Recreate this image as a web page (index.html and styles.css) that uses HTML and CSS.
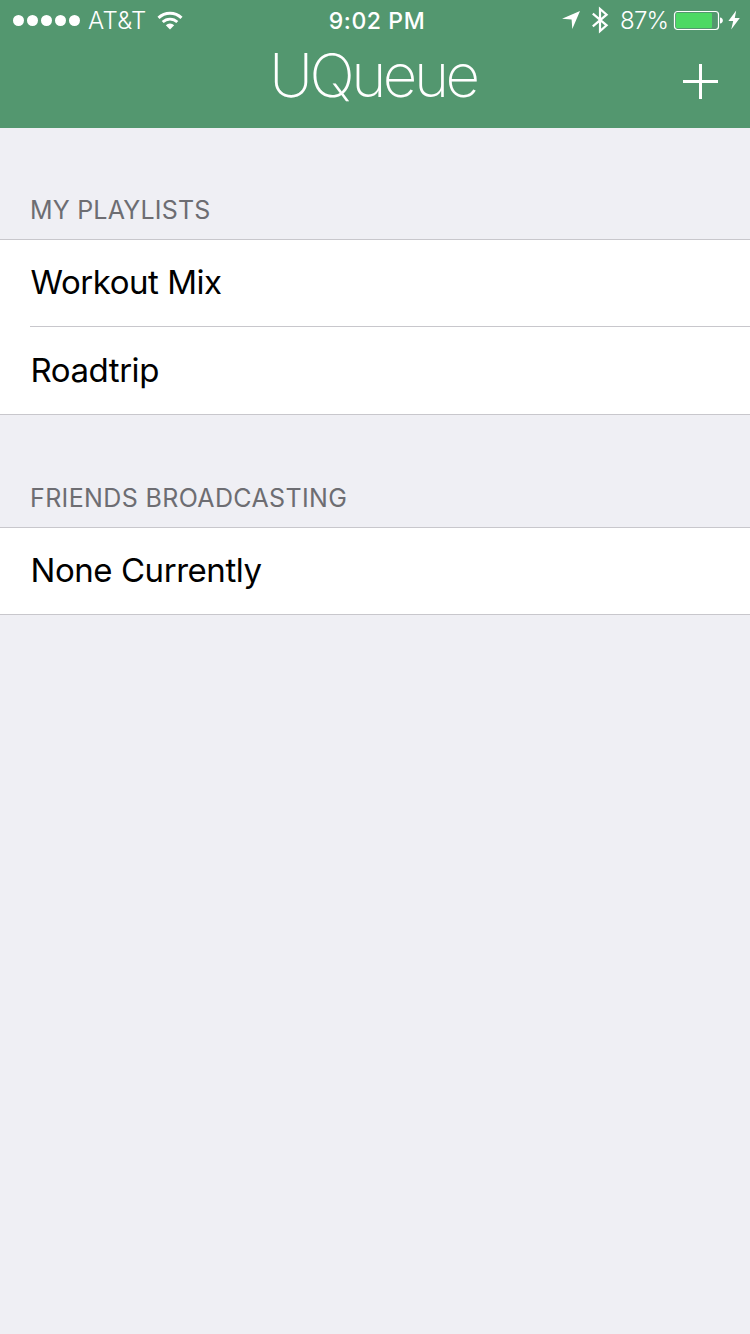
FILE: index.html
```
<!DOCTYPE html>
<html lang="en">
<head>
<meta charset="utf-8">
<title>UQueue</title>
<link rel="stylesheet" href="styles.css">
</head>
<body>
<header class="top">
  <div class="status">
    <div class="status-left">
      <span class="signal"><i class="dot"></i><i class="dot"></i><i class="dot"></i><i class="dot"></i><i class="dot"></i></span>
      <span class="carrier">AT&amp;T</span>
      <svg class="wifi" width="26" height="20" viewBox="0 0 26 20">
        <path d="M1.5 6.8A16.5 16.5 0 0 1 24.5 6.8" fill="none" stroke="#fff" stroke-width="3"/>
        <path d="M5.7 11.1A10.4 10.4 0 0 1 20.3 11.1" fill="none" stroke="#fff" stroke-width="2.8"/>
        <path d="M8.8 14.3A6 6 0 0 1 17.2 14.3L13 18.6Z" fill="#fff"/>
      </svg>
    </div>
    <span class="clock">9:02 PM</span>
    <div class="status-right">
      <svg class="location" width="20" height="20" viewBox="0 0 20 20"><path d="M19 1L11.3 19L10.6 9.6L1 8.7Z" fill="#fff"/></svg>
      <svg class="bluetooth" width="18" height="28" viewBox="0 0 18 28"><path d="M1.8 7.7L15.6 19.3L9 25V3L15.6 8.7L1.8 20.3" fill="none" stroke="#fff" stroke-width="2.2"/></svg>
      <span class="percent">87%</span>
      <svg class="battery" width="48" height="20" viewBox="0 0 48 20">
        <rect x=".5" y="1.5" width="44" height="18" rx="3" fill="none" stroke="#fff" stroke-width="1.2"/>
        <rect x="2" y="3" width="36" height="15" rx="1" fill="#4cd964"/>
        <path d="M46 7.5Q48.8 7.8 48.8 10.5T46 13.5Z" fill="#fff"/>
      </svg>
      <svg class="bolt" width="12" height="20" viewBox="0 0 12 20"><path d="M8.2 .5L.4 11H5.2L3.2 19.5L11.8 8H6.8Z" fill="#fff"/></svg>
    </div>
  </div>
  <div class="nav">
    <h1 class="title">UQueue</h1>
    <svg class="add" width="35" height="35" viewBox="0 0 35 35"><path d="M0 17.5H35M17.5 0V35" stroke="#fff" stroke-width="3"/></svg>
  </div>
</header>
<main>
  <h2 class="heading">MY PLAYLISTS</h2>
  <ul class="list">
    <li class="row">Workout Mix</li>
    <li class="row">Roadtrip</li>
  </ul>
  <h2 class="heading heading-friends">FRIENDS BROADCASTING</h2>
  <ul class="list">
    <li class="row">None Currently</li>
  </ul>
</main>
</body>
</html>
```
FILE: styles.css
```
* { box-sizing: border-box; }
body {
  margin: 0;
  min-height: 1334px;
  background: #efeff4;
  font-family: Inter, "Liberation Sans", sans-serif;
  color: #000;
}
.top { height: 128px; background: #53976f; color: #fff; }
.status {
  height: 40px;
  display: grid;
  grid-template-columns: 1fr auto 1fr;
  align-items: center;
  font-size: 24px;
  line-height: 40px;
  white-space: nowrap;
}
.status-left, .status-right { display: flex; align-items: center; }
.status-left { padding-left: 13px; }
.status-right { justify-content: flex-end; padding-right: 10px; }
.signal { display: flex; gap: 3px; }
.dot { width: 11px; height: 11px; border-radius: 50%; background: #fff; }
.carrier { margin-left: 8px; padding-top: 2px; line-height: 38px; font-weight: 330; letter-spacing: .3px; }
.wifi { margin: 1px 0 0 10px; }
.clock { font-weight: 550; font-size: 23px; letter-spacing: .6px; margin-left: 4px; padding-top: 2px; line-height: 38px; }
.bluetooth { margin-left: 10px; }
.percent { margin-left: 11px; padding-top: 2px; line-height: 38px; font-weight: 330; letter-spacing: -.9px; }
.battery { margin-left: 6px; overflow: visible; }
.bolt { margin-left: 6px; }
.nav {
  height: 88px;
  display: grid;
  grid-template-columns: 1fr auto 1fr;
  padding-right: 32px;
}
.title {
  grid-column: 2;
  margin: 0;
  padding-left: 28px;
  font-size: 60px;
  line-height: 70px;
  font-weight: 200;
  letter-spacing: -3.5px;
}
.add { justify-self: end; margin-top: 24px; }
.heading {
  margin: 0;
  height: 111px;
  padding: 66px 30px 0;
  font-size: 25px;
  line-height: 32px;
  font-weight: 400;
  letter-spacing: .2px;
  color: #6d6d72;
}
.list {
  margin: 0;
  padding: 0 0 0 30px;
  list-style: none;
  background: #fff;
  border-top: 1px solid #c8c7cc;
  border-bottom: 1px solid #c8c7cc;
}
.row { height: 86px; padding-left: .5px; font-size: 33px; line-height: 84px; letter-spacing: -.45px; }
.row + .row { height: 88px; line-height: 86px; border-top: 1px solid #c8c7cc; }
.heading-friends { height: 112px; padding-top: 67px; letter-spacing: .37px; }
```
